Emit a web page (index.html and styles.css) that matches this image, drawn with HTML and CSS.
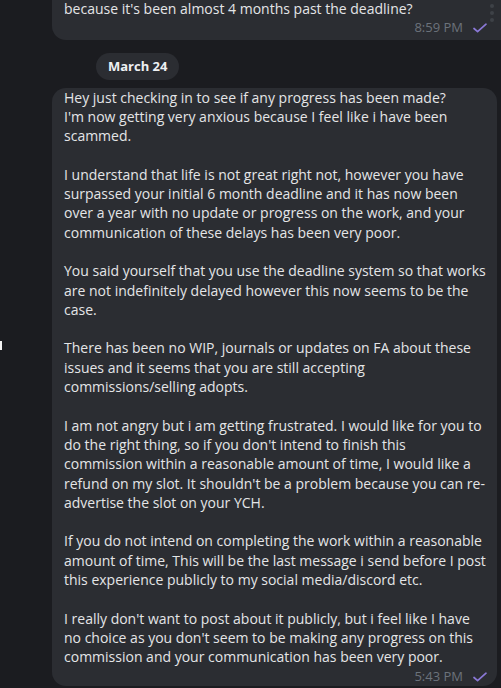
FILE: index.html
```html
<!DOCTYPE html>
<html lang="en">
<head>
<meta charset="utf-8">
<title>Chat</title>
<link rel="stylesheet" href="styles.css">
</head>
<body>
<div class="chat">
  <div class="msg msg-top">
    <div class="bubble bubble-top">
      <p class="para">because it's been almost 4 months past the deadline?</p>
      <div class="meta">
        <span class="time">8:59 PM</span>
        <svg class="check" width="14" height="10" viewBox="0 0 14 10"><path d="M1 5.5 L4.6 8.6 L13 1.2" fill="none" stroke="#8a78d6" stroke-width="1.7" stroke-linecap="round" stroke-linejoin="round"/></svg>
      </div>
    </div>
  </div>

  <div class="date-row"><span class="date-pill">March 24</span></div>

  <div class="msg">
    <div class="bubble bubble-main">
      <p class="para">Hey just checking in to see if any progress has been made?<br>I'm now getting very anxious because I feel like i have been<br>scammed.</p>
      <p class="para">I understand that life is not great right not, however you have<br>surpassed your initial 6 month deadline and it has now been<br>over a year with no update or progress on the work, and your<br>communication of these delays has been very poor.</p>
      <p class="para">You said yourself that you use the deadline system so that works<br>are not indefinitely delayed however this now seems to be the<br>case.</p>
      <p class="para">There has been no WIP, journals or updates on FA about these<br>issues and it seems that you are still accepting<br>commissions/selling adopts.</p>
      <p class="para">I am not angry but i am getting frustrated. I would like for you to<br>do the right thing, so if you don't intend to finish this<br>commission within a reasonable amount of time, I would like a<br>refund on my slot. It shouldn't be a problem because you can re-<br>advertise the slot on your YCH.</p>
      <p class="para">If you do not intend on completing the work within a reasonable<br>amount of time, This will be the last message i send before I post<br>this experience publicly to my social media/discord etc.</p>
      <p class="para last">I really don't want to post about it publicly, but i feel like I have<br>no choice as you don't seem to be making any progress on this<br>commission and your communication has been very poor.</p>
      <div class="meta">
        <span class="time">5:43 PM</span>
        <svg class="check" width="14" height="10" viewBox="0 0 14 10"><path d="M1 5.5 L4.6 8.6 L13 1.2" fill="none" stroke="#8a78d6" stroke-width="1.7" stroke-linecap="round" stroke-linejoin="round"/></svg>
      </div>
    </div>
  </div>

  <span class="dots"><i></i><i></i><i></i></span>
  <span class="edge-mark"></span>
</div>
</body>
</html>
```

FILE: styles.css
```css
html, body {
  margin: 0;
  padding: 0;
  background: #1b1c20;
  width: 501px;
  height: 688px;
  overflow: hidden;
}

.chat {
  position: relative;
  width: 501px;
  height: 688px;
  overflow: hidden;
  font-family: "Open Sans", "DejaVu Sans", sans-serif;
  font-size: 14px;
  line-height: 19.3px;
  color: #e4e5e7;
}

.msg {
  display: flex;
  padding-left: 52px;
}

.msg-top {
  margin-top: -21px;
}

.bubble {
  flex-shrink: 0;
  width: 445px;
  box-sizing: border-box;
  background: #2b2d32;
  border-radius: 14px;
  padding: 0 10px 0 12px;
  white-space: nowrap;
}

.bubble-top {
  width: 480px;
  padding-top: 20px;
  padding-right: 45px;
  padding-bottom: 2px;
  border-radius: 14px 0 0 14px;
}

.bubble-main {
  padding-top: 0;
  padding-bottom: 0;
}

.para {
  margin: 0 0 19.3px;
}

.para.last,
.bubble-top .para {
  margin-bottom: 0;
}

.meta {
  display: flex;
  justify-content: flex-end;
  align-items: center;
  gap: 10px;
  height: 19.3px;
}

.time {
  color: #6b727b;
  font-size: 13px;
}

.check {
  display: block;
  margin-top: 1px;
}

.date-row {
  display: flex;
  padding-left: 96px;
  margin: 13px 0 8px;
}

.date-pill {
  background: #2b2d32;
  color: #eef0f2;
  font-weight: 700;
  font-size: 13px;
  line-height: 27px;
  height: 27px;
  padding: 0 12px;
  border-radius: 14px;
}

.dots {
  position: absolute;
  left: 490px;
  top: 4px;
  display: flex;
  flex-direction: column;
  gap: 3px;
}

.dots i {
  display: block;
  width: 4px;
  height: 4px;
  border-radius: 50%;
  background: #3e4147;
}

.edge-mark {
  position: absolute;
  left: 0;
  top: 341px;
  width: 2px;
  height: 9px;
  background: #f2f2f2;
}
```
